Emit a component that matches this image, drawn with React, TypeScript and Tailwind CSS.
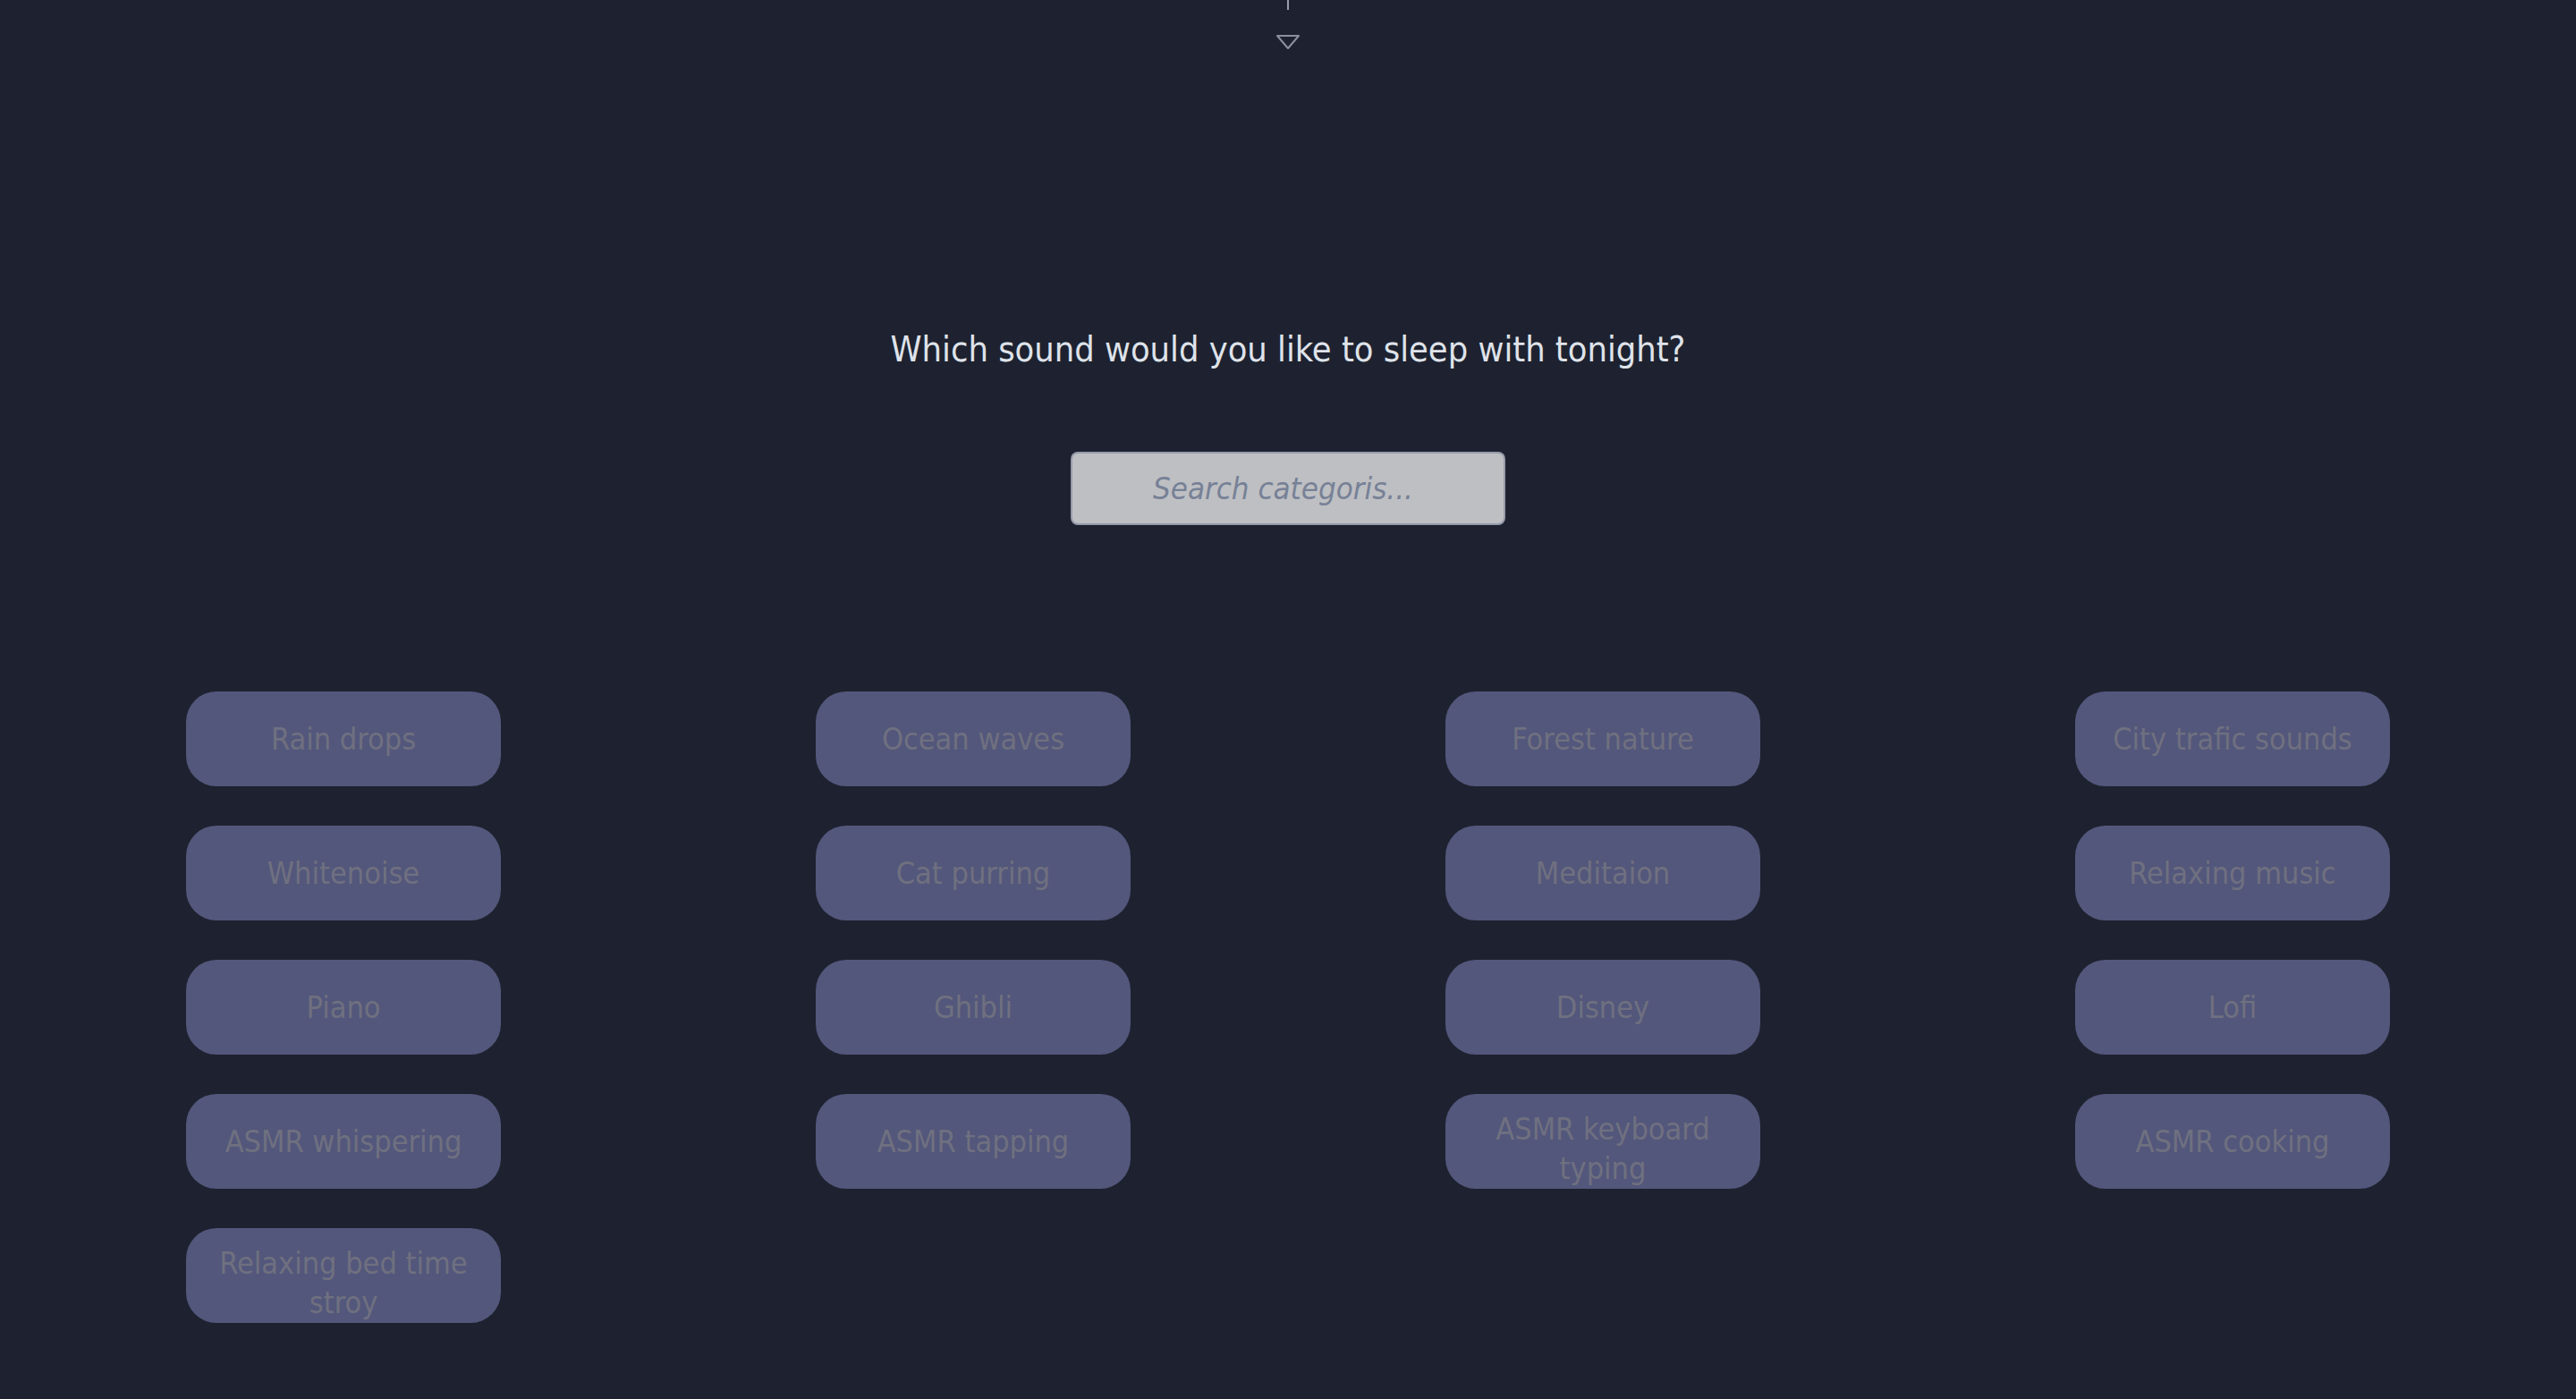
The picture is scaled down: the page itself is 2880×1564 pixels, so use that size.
import React from "react";

const items = [
  "Rain drops",
  "Ocean waves",
  "Forest nature",
  "City trafic sounds",
  "Whitenoise",
  "Cat purring",
  "Meditaion",
  "Relaxing music",
  "Piano",
  "Ghibli",
  "Disney",
  "Lofi",
  "ASMR whispering",
  "ASMR tapping",
  "ASMR keyboard typing",
  "ASMR cooking",
  "Relaxing bed time stroy",
];

const font = { fontFamily: '"DejaVu Sans Condensed", "DejaVu Sans", sans-serif', fontStretch: "condensed" } as const;

export default function App() {
  return (
    <div className="min-h-[1564px] w-full bg-[#1e2230] flex flex-col items-center" style={font}>
      <div className="w-[2px] h-[11px] bg-[#9a9ea8]" />
      <svg width="28" height="18" viewBox="0 0 28 18" className="mt-[27px]">
        <path d="M2 2 L26 2 L14 16 Z" fill="none" stroke="#8b909b" strokeWidth="2" strokeLinejoin="round" />
      </svg>
      <h1 className="mt-[312px] text-[39.4px] leading-[45px] text-[#dfe3ea] font-normal">
        Which sound would you like to sleep with tonight?
      </h1>
      <input
        type="text"
        placeholder="Search categoris..."
        className="mt-[92px] w-[486px] h-[82px] rounded-[8px] border-2 border-[#959bab] bg-[#bebfc3] text-center pr-[11px] italic text-[34.6px] text-[#3b4252] placeholder:text-[#778196] outline-none"
        style={font}
      />
      <div className="mt-[186px] w-full px-[32px] grid grid-cols-4 gap-y-[44px] justify-items-center">
        {items.map((t) => (
          <button
            key={t}
            className="w-[352px] h-[106px] rounded-[34px] bg-[#53577b] text-[#6f7080] text-[34px] leading-[44px] px-[24px] py-[17px] flex justify-center text-center [align-items:safe_center] overflow-visible"
            style={font}
          >
            {t}
          </button>
        ))}
      </div>
    </div>
  );
}
